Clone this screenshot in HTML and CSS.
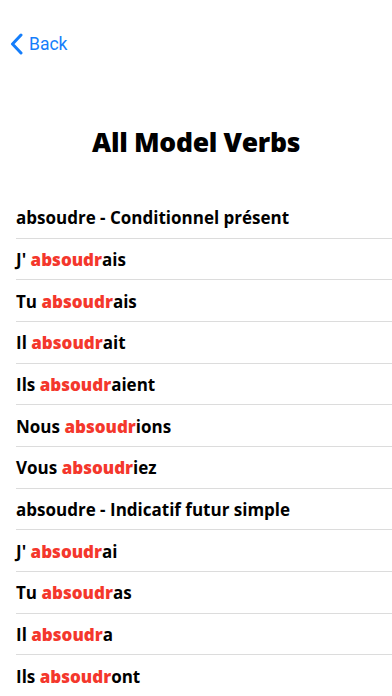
FILE: index.html
```html
<!DOCTYPE html>
<html lang="fr">
<head>
<meta charset="utf-8">
<title>All Model Verbs</title>
<link rel="stylesheet" href="styles.css">
</head>
<body>
<header class="nav">
  <a class="back" href="#">
    <svg class="chev" width="13" height="22" viewBox="0 0 13 22"><path d="M11 2 L2.5 11 L11 20" fill="none" stroke="#157efb" stroke-width="3" stroke-linecap="round" stroke-linejoin="round"/></svg>
    <span>Back</span>
  </a>
</header>
<h1 class="title">All Model Verbs</h1>
<ul class="list">
  <li class="row"><span>absoudre - Conditionnel présent</span></li>
  <li class="row"><span>J' <b class="stem">absoudr</b>ais</span></li>
  <li class="row"><span>Tu <b class="stem">absoudr</b>ais</span></li>
  <li class="row"><span>Il <b class="stem">absoudr</b>ait</span></li>
  <li class="row"><span>Ils <b class="stem">absoudr</b>aient</span></li>
  <li class="row"><span>Nous <b class="stem">absoudr</b>ions</span></li>
  <li class="row"><span>Vous <b class="stem">absoudr</b>iez</span></li>
  <li class="row"><span>absoudre - Indicatif futur simple</span></li>
  <li class="row"><span>J' <b class="stem">absoudr</b>ai</span></li>
  <li class="row"><span>Tu <b class="stem">absoudr</b>as</span></li>
  <li class="row"><span>Il <b class="stem">absoudr</b>a</span></li>
  <li class="row"><span>Ils <b class="stem">absoudr</b>ont</span></li>
</ul>
</body>
</html>
```
FILE: styles.css
```css
html, body {
  margin: 0;
  padding: 0;
  background: #ffffff;
  overflow: hidden;
}
body {
  width: 392px;
  height: 696px;
  font-family: "Open Sans", "DejaVu Sans Condensed", sans-serif;
  color: #000;
}
.nav {
  height: 40px;
  padding-top: 24px;
  display: flex;
  align-items: center;
}
.back {
  display: flex;
  align-items: center;
  gap: 6px;
  padding-left: 10px;
  color: #157efb;
  text-decoration: none;
  font-family: Roboto, "Liberation Sans", sans-serif;
  font-size: 17.5px;
}
.chev {
  display: block;
}
.title {
  margin: 0;
  padding-top: 61px;
  height: 72px;
  box-sizing: content-box;
  text-align: center;
  font-size: 26.5px;
  font-weight: 800;
  line-height: 34px;
  letter-spacing: -0.3px;
}
.list {
  list-style: none;
  margin: 0;
  padding: 0;
}
.row {
  margin-left: 16px;
  height: 41.67px;
  box-sizing: border-box;
  border-bottom: 1px solid #dcdcdc;
  display: flex;
  align-items: center;
  padding-top: 1px;
  font-size: 17px;
  font-weight: bold;
}
.stem {
  color: #f4372c;
}
```
